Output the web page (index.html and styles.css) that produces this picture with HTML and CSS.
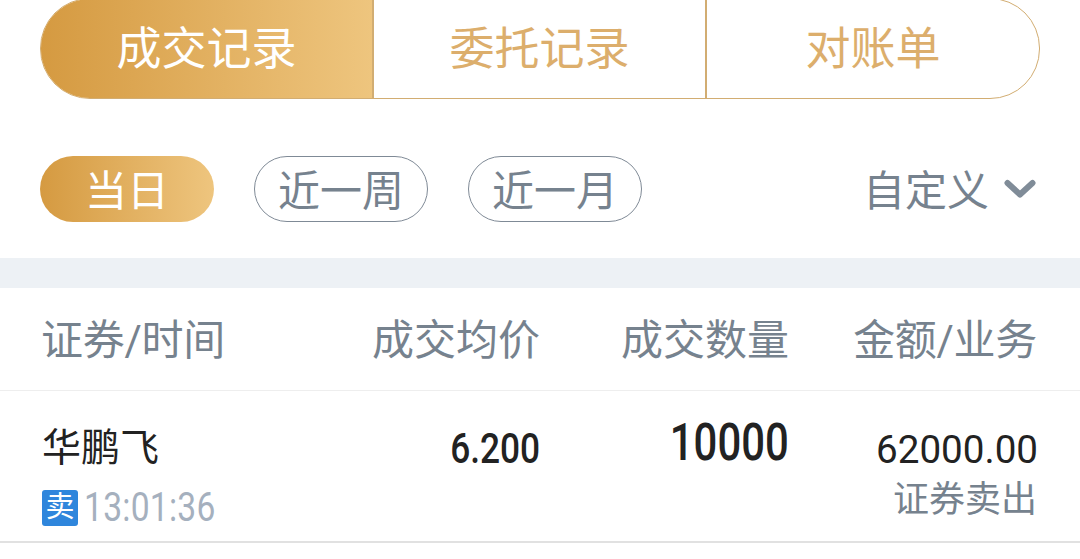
FILE: index.html
```html
<!DOCTYPE html>
<html lang="zh-CN">
<head>
    <meta charset="UTF-8">
    <meta name="viewport" content="width=device-width, initial-scale=1.0">
    <title>成交记录</title>
    <link rel="stylesheet" href="styles.css">
</head>
<body>
    <div class="page">
        <div class="tabs">
            <div class="tab tab-active">成交记录</div>
            <div class="tab">委托记录</div>
            <div class="tab">对账单</div>
        </div>

        <div class="filters">
            <div class="pill pill-active">当日</div>
            <div class="pill">近一周</div>
            <div class="pill">近一月</div>
            <div class="custom">
                <span>自定义</span>
                <svg class="chevron" width="32" height="22" viewBox="0 0 32 22">
                    <path d="M3.5 5 L16 16.5 L28.5 5" fill="none" stroke="#808c98" stroke-width="6" stroke-linecap="round" stroke-linejoin="round"/>
                </svg>
            </div>
        </div>

        <div class="divider"></div>

        <div class="table-head">
            <div class="col col-name head-mixed">证券/时间</div>
            <div class="col col-price">成交均价</div>
            <div class="col col-qty">成交数量</div>
            <div class="col col-amount head-mixed">金额/业务</div>
        </div>

        <div class="table-row">
            <div class="col col-name">
                <div class="stock">华鹏飞</div>
                <div class="time-line"><span class="badge">卖</span><span class="time">13:01:36</span></div>
            </div>
            <div class="col col-price"><span class="cell-price">6.200</span></div>
            <div class="col col-qty"><span class="cell-qty">10000</span></div>
            <div class="col col-amount">
                <div class="amount">62000.00</div>
                <div class="biz">证券卖出</div>
            </div>
        </div>
    </div>
</body>
</html>
```

FILE: styles.css
```css
* {
    box-sizing: border-box;
}
html, body {
    margin: 0;
    padding: 0;
}
body {
    width: 1080px;
    height: 559px;
    overflow: hidden;
    background: #fff;
    font-family: "Roboto", "Noto Sans CJK SC", sans-serif;
}
.page {
    display: flex;
    flex-direction: column;
}
.tabs {
    display: flex;
    margin: -2px 40px 0;
    height: 101px;
    border: 1px solid #d2ad72;
    border-radius: 50px;
    overflow: hidden;
}
.tab {
    width: 333px;
    display: flex;
    align-items: center;
    justify-content: center;
    padding-bottom: 6px;
    font-size: 45px;
    color: #dcae6c;
    border-left: 2px solid #d2ad72;
}
.tab:last-child {
    flex: 1;
}
.tab-active {
    width: 331px;
    border-left: none;
    color: #fff;
    background: linear-gradient(90deg, #d59a41, #eec57e);
}
.filters {
    display: flex;
    align-items: center;
    margin-top: 57px;
    padding: 0 44px 0 40px;
    height: 66px;
}
.pill {
    width: 174px;
    height: 66px;
    margin-right: 40px;
    padding-bottom: 4px;
    border: 1px solid #7f8a96;
    border-radius: 33px;
    display: flex;
    align-items: center;
    justify-content: center;
    font-size: 42px;
    color: #76828e;
}
.pill-active {
    border: none;
    color: #fff;
    background: linear-gradient(90deg, #d59a41, #eec57e);
}
.custom {
    margin-left: auto;
    display: flex;
    align-items: center;
    gap: 15px;
    padding-bottom: 4px;
    font-size: 42px;
    color: #76828e;
}
.chevron {
    margin-top: 4px;
}
.divider {
    height: 30px;
    margin-top: 36px;
    background: #edf1f5;
}
.table-head {
    display: flex;
    align-items: center;
    height: 103px;
    padding: 0 43px 5px;
    border-bottom: 1px solid #eee;
    font-size: 42px;
    color: #76828e;
}
.head-mixed {
    letter-spacing: -0.3px;
}
.table-head .col-name {
    margin-left: -2px;
    width: 292px;
}
.col-name {
    width: 290px;
}
.col-price {
    width: 207px;
    text-align: right;
}
.col-qty {
    width: 249px;
    text-align: right;
}
.col-amount {
    flex: 1;
    text-align: right;
}
.table-row {
    display: flex;
    height: 152px;
    padding: 0 43px;
    border-bottom: 2px solid #e1e1e1;
    color: #222;
}
.stock {
    font-size: 39px;
    line-height: 44px;
    margin-top: 35px;
    margin-left: -1px;
}
.time-line {
    display: flex;
    align-items: center;
    margin-top: 14px;
}
.badge {
    width: 36px;
    height: 36px;
    margin-left: -1px;
    margin-right: 6px;
    border-radius: 3px;
    background: #2f86dc;
    color: #fff;
    font-size: 29px;
    line-height: 34px;
    text-align: center;
}
/* digits in the shot are a narrow DIN-like face, squeeze Roboto to get close */
.time {
    display: inline-block;
    font-size: 40px;
    color: #a5b0be;
    letter-spacing: 0.3px;
    transform: scaleX(0.84);
    transform-origin: left center;
}
.cell-price {
    display: inline-block;
    font-size: 42px;
    font-weight: 500;
    line-height: 44px;
    margin-top: 36px;
    transform: scaleX(0.84);
    transform-origin: right center;
}
.cell-qty {
    display: inline-block;
    font-size: 52px;
    font-weight: 500;
    line-height: 52px;
    margin-top: 26px;
    transform: scaleX(0.805);
    transform-origin: right center;
}
.amount {
    font-size: 38.6px;
    line-height: 44px;
    margin-top: 37px;
    margin-right: -1px;
}
.biz {
    font-size: 36px;
    line-height: 42px;
    margin-top: 7px;
    color: #76828e;
}
```
